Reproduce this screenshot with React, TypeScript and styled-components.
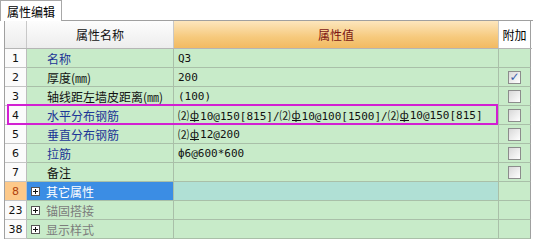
import React from 'react';
import styled, { createGlobalStyle, css } from 'styled-components';

const GlobalStyle = createGlobalStyle`
  body {
    margin: 0;
    background: #ffffff;
    font-family: "Noto Sans CJK SC", "DejaVu Sans", sans-serif;
    font-size: 12px;
  }
`;

type Row = {
  no: string;
  name: string;
  value?: React.ReactNode;
  tone?: 'blue' | 'black' | 'gray' | 'white';
  check?: 'on' | 'off';
  group?: boolean;
  selected?: boolean;
  highlight?: boolean;
};

const Bar = styled.span`
  display: inline-block;
  border-bottom: 1px solid #111;
  line-height: 9px;
  height: 10px;
  margin: 0 1px;
  font-family: "Noto Sans CJK SC", sans-serif;
  font-size: 11px;
`;

const Steel = () => <Bar>ф</Bar>;

const rows: Row[] = [
  { no: '1', name: '名称', value: 'Q3', tone: 'blue' },
  { no: '2', name: '厚度(㎜)', value: '200', tone: 'black', check: 'on' },
  { no: '3', name: '轴线距左墙皮距离(㎜)', value: '(100)', tone: 'black', check: 'off' },
  {
    no: '4',
    name: '水平分布钢筋',
    value: (
      <>
        ⑵<Steel />10@150[815]/⑵<Steel />10@100[1500]/⑵<Steel />10@150[815]
      </>
    ),
    tone: 'blue',
    check: 'off',
    highlight: true,
  },
  {
    no: '5',
    name: '垂直分布钢筋',
    value: (
      <>
        ⑵<Steel />12@200
      </>
    ),
    tone: 'blue',
    check: 'off',
  },
  { no: '6', name: '拉筋', value: 'ф6@600*600', tone: 'blue', check: 'off' },
  { no: '7', name: '备注', value: '', tone: 'black', check: 'off' },
  { no: '8', name: '其它属性', tone: 'white', group: true, selected: true },
  { no: '23', name: '锚固搭接', tone: 'gray', group: true },
  { no: '38', name: '显示样式', tone: 'gray', group: true },
];

const App = () => {
  return (
    <>
      <GlobalStyle />
      <Panel>
        <TabBar>
          <Tab>属性编辑</Tab>
          <TabFill />
        </TabBar>
        <Grid>
          <HeadRow>
            <HeadNo />
            <HeadName>属性名称</HeadName>
            <HeadValue>属性值</HeadValue>
            <HeadExtra>附加</HeadExtra>
          </HeadRow>
          {rows.map((r) => (
            <BodyRow key={r.no}>
              <NoCell $selected={r.selected}>{r.no}</NoCell>
              <NameCell $selected={r.selected} $group={r.group} $tone={r.tone}>
                {r.group && <Plus />}
                {r.name}
              </NameCell>
              <ValueCell $selected={r.selected}>{r.value}</ValueCell>
              <ExtraCell>
                {r.check && <Check $on={r.check === 'on'}>{r.check === 'on' ? '✓' : ''}</Check>}
              </ExtraCell>
              {r.highlight && <Highlight />}
            </BodyRow>
          ))}
        </Grid>
      </Panel>
    </>
  );
};

export default App;

const Panel = styled.div`
  width: 533px;
  height: 241px;
  overflow: hidden;
`;

const TabBar = styled.div`
  display: flex;
  height: 21px;
`;

const Tab = styled.div`
  width: 62px;
  height: 21px;
  box-sizing: border-box;
  border: 1px solid #a8a8a8;
  border-bottom: none;
  display: flex;
  align-items: center;
  justify-content: center;
  font-size: 12px;
  color: #000;
  padding-top: 1px;
`;

const TabFill = styled.div`
  flex: 1;
  border-bottom: 1px solid #a0a0a0;
`;

const cols = css`
  display: grid;
  grid-template-columns: 22px 147px 325px 32px;
`;

const Grid = styled.div`
  margin-left: 4px;
  width: 527px;
  border-left: 1px solid #a0a0a0;
`;

const HeadRow = styled.div`
  ${cols}
  height: 27px;
  border-bottom: 1px solid #b5b5b5;
`;

const headCell = css`
  display: flex;
  align-items: center;
  justify-content: center;
  border-right: 1px solid #c8c8c8;
  font-size: 12px;
`;

const HeadNo = styled.div`
  ${headCell}
  background: linear-gradient(#fbfbfb, #ececec);
`;

const HeadName = styled.div`
  ${headCell}
  background: linear-gradient(#fdfdfd, #ededed);
  color: #111;
`;

const HeadValue = styled.div`
  ${headCell}
  background: linear-gradient(#fde6bd, #f6c97c 60%, #f2ba62);
  color: #7b1414;
`;

const HeadExtra = styled.div`
  ${headCell}
  background: #ffffff;
  border-right: 1px solid #a0a0a0;
`;

const BodyRow = styled.div`
  ${cols}
  position: relative;
  height: 19px;
`;

const cell = css`
  display: flex;
  align-items: center;
  border-right: 1px solid #a9bfa8;
  border-bottom: 1px solid #a9bfa8;
  white-space: nowrap;
  overflow: hidden;
`;

const NoCell = styled.div<{ $selected?: boolean }>`
  ${cell}
  justify-content: center;
  background: ${(p) => (p.$selected ? '#fdc98a' : '#fbfbfb')};
  color: ${(p) => (p.$selected ? '#b0400c' : '#111')};
  border-right-color: #bcbcbc;
  border-bottom-color: #c4c4c4;
  font-family: "DejaVu Sans", sans-serif;
  font-size: 11px;
`;

const toneColor = { blue: '#1c3596', black: '#111111', gray: '#7c7c7c', white: '#ffffff' };

const NameCell = styled.div<{ $selected?: boolean; $group?: boolean; $tone?: keyof typeof toneColor }>`
  ${cell}
  padding-left: ${(p) => (p.$group ? '4px' : '20px')};
  gap: 6px;
  background: ${(p) => (p.$selected ? '#3b8de4' : '#c8ebc9')};
  color: ${(p) => toneColor[p.$tone || 'black']};
  font-size: 12px;
`;

const ValueCell = styled.div<{ $selected?: boolean }>`
  ${cell}
  padding-left: 4px;
  background: ${(p) => (p.$selected ? '#b0e0d5' : '#c8ebc9')};
  color: #111;
  font-family: "DejaVu Sans Mono", "Noto Sans CJK SC", monospace;
  font-size: 11px;
  letter-spacing: 0;
`;

const ExtraCell = styled.div`
  ${cell}
  justify-content: center;
  background: #c8ebc9;
  border-right-color: #a0a0a0;
`;

const Check = styled.span<{ $on?: boolean }>`
  width: 11px;
  height: 11px;
  border: 1px solid #8c8c8c;
  background: linear-gradient(135deg, #d8d8d8, #ffffff);
  display: flex;
  align-items: center;
  justify-content: center;
  color: #3a5fa8;
  font-size: 12px;
  font-weight: bold;
  line-height: 1;
  font-family: "DejaVu Sans", sans-serif;
`;

const Plus = styled.span`
  position: relative;
  width: 9px;
  height: 9px;
  box-sizing: border-box;
  border: 1px solid #555;
  background: #fff;
  flex: none;
  &::before,
  &::after {
    content: '';
    position: absolute;
    background: #111;
  }
  &::before {
    left: 1px;
    right: 1px;
    top: 3px;
    height: 1px;
  }
  &::after {
    top: 1px;
    bottom: 1px;
    left: 3px;
    width: 1px;
  }
`;

const Highlight = styled.div`
  position: absolute;
  left: 2px;
  top: -2px;
  width: 491px;
  height: 21px;
  box-sizing: border-box;
  border: 2px solid #d21fd2;
  pointer-events: none;
`;
